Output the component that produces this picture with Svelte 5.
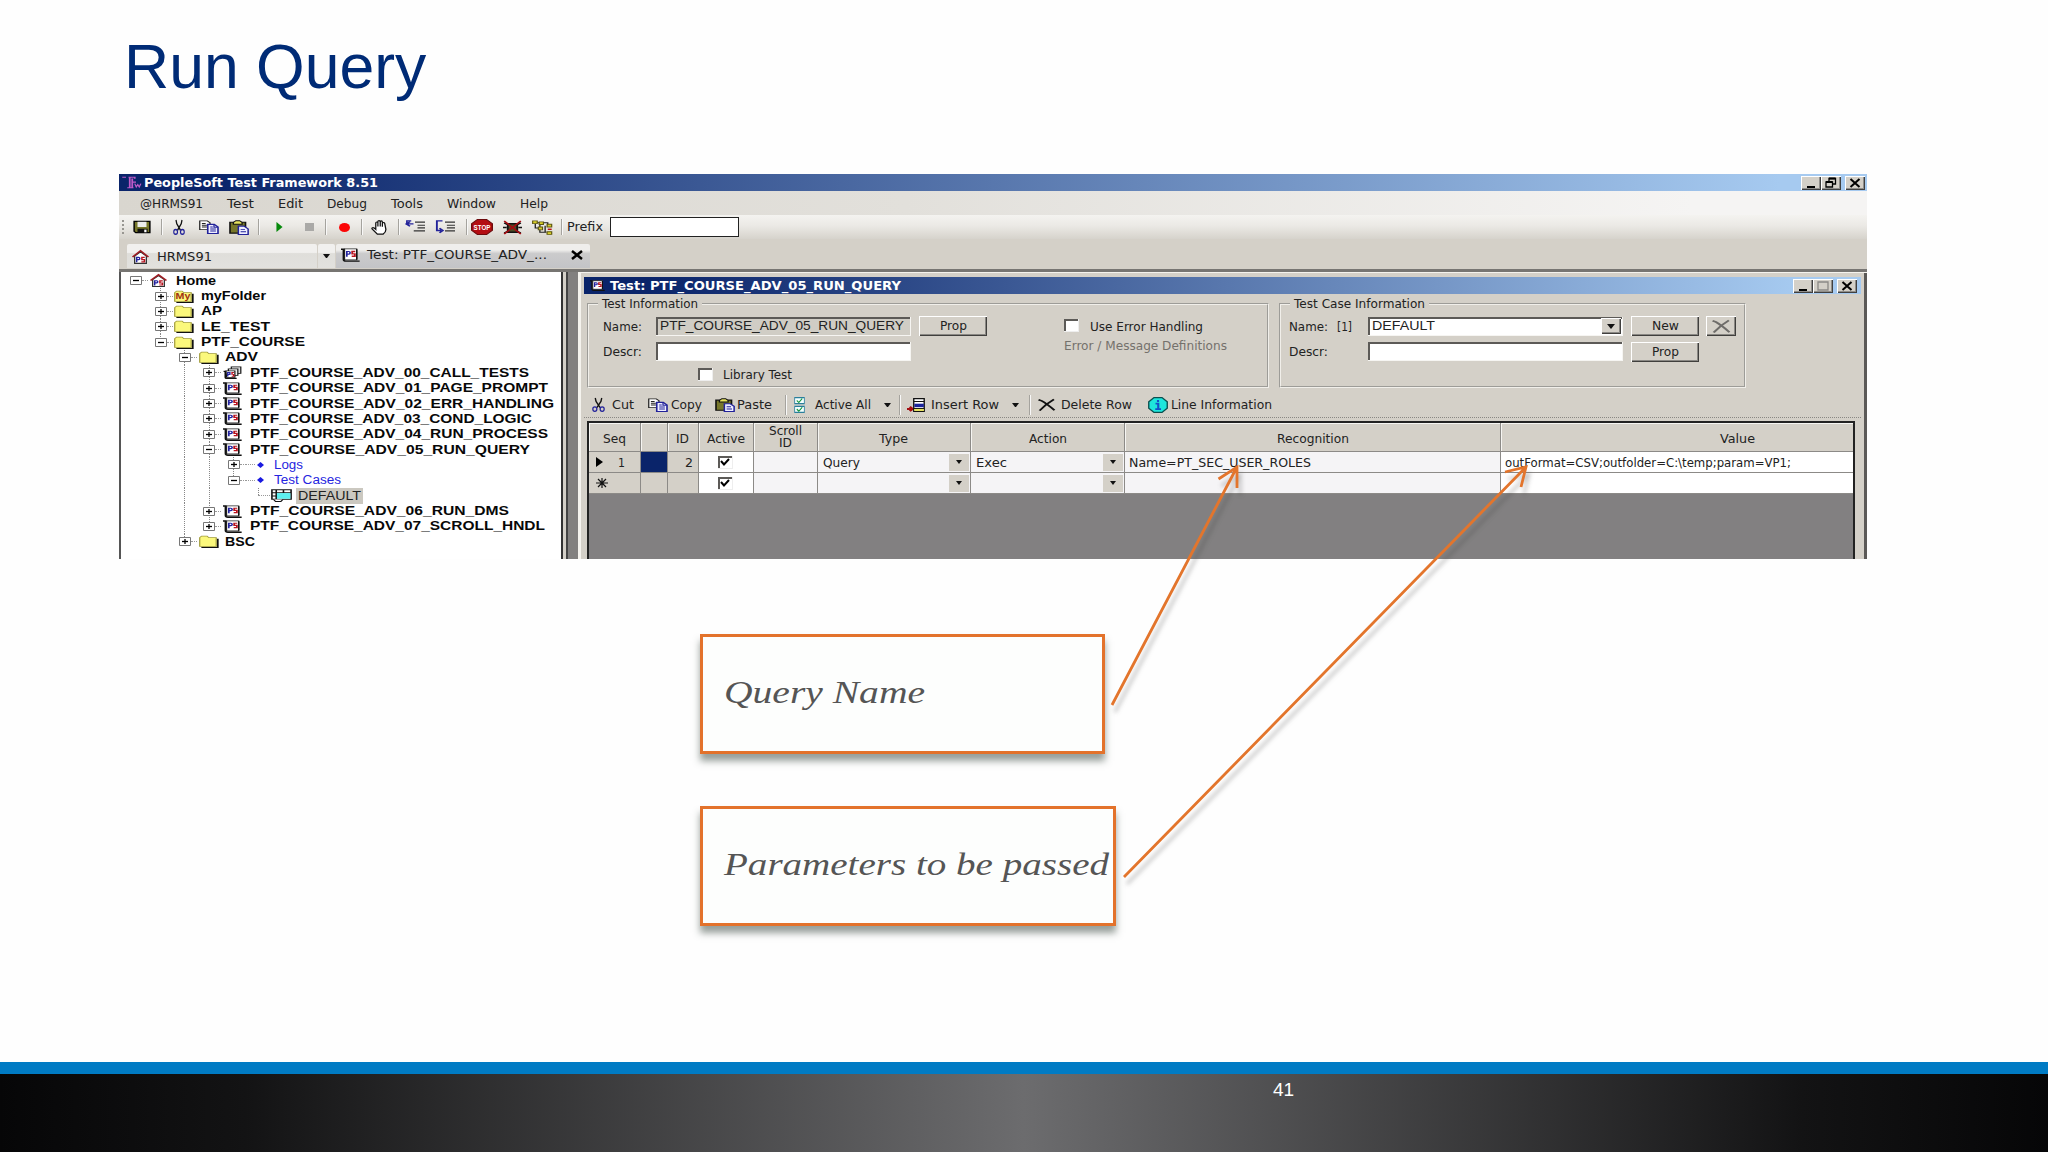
<script lang="ts">
  interface TreeNode {
    level: number;
    icon: string;
    label: string;
    width: number;
    box?: '+' | '-';
    rails?: number[];
    tail?: boolean;
  }

  const menu: [string, number][] = [
    ['@HRMS91', 63],
    ['Test', 27],
    ['Edit', 25],
    ['Debug', 40],
    ['Tools', 32],
    ['Window', 49],
    ['Help', 28],
  ];

  // `rails` lists the ancestor columns whose dotted line passes through the row.
  const tree: TreeNode[] = [
    { level: 0, icon: 'house', label: 'Home', width: 40, box: '-' },
    { level: 1, icon: 'my', label: 'myFolder', width: 65, box: '+' },
    { level: 1, icon: 'folder', label: 'AP', width: 21, box: '+' },
    { level: 1, icon: 'folder', label: 'LE_TEST', width: 69, box: '+' },
    { level: 1, icon: 'folder', label: 'PTF_COURSE', width: 104, box: '-', tail: true },
    { level: 2, icon: 'folder', label: 'ADV', width: 33, box: '-' },
    { level: 3, icon: 'calls', label: 'PTF_COURSE_ADV_00_CALL_TESTS', width: 279, box: '+', rails: [2] },
    { level: 3, icon: 'ps', label: 'PTF_COURSE_ADV_01_PAGE_PROMPT', width: 298, box: '+', rails: [2] },
    { level: 3, icon: 'ps', label: 'PTF_COURSE_ADV_02_ERR_HANDLING', width: 304, box: '+', rails: [2] },
    { level: 3, icon: 'ps', label: 'PTF_COURSE_ADV_03_COND_LOGIC', width: 282, box: '+', rails: [2] },
    { level: 3, icon: 'ps', label: 'PTF_COURSE_ADV_04_RUN_PROCESS', width: 298, box: '+', rails: [2] },
    { level: 3, icon: 'ps', label: 'PTF_COURSE_ADV_05_RUN_QUERY', width: 280, box: '-', rails: [2] },
    { level: 4, icon: 'dot', label: 'Logs', width: 29, box: '+', rails: [2, 3] },
    { level: 4, icon: 'dot', label: 'Test Cases', width: 67, box: '-', rails: [2, 3], tail: true },
    { level: 5, icon: 'case', label: 'DEFAULT', width: 63, rails: [2, 3] },
    { level: 3, icon: 'ps', label: 'PTF_COURSE_ADV_06_RUN_DMS', width: 259, box: '+', rails: [2] },
    { level: 3, icon: 'ps', label: 'PTF_COURSE_ADV_07_SCROLL_HNDL', width: 295, box: '+', rails: [2], tail: true },
    { level: 2, icon: 'folder', label: 'BSC', width: 30, box: '+', tail: true },
  ];
</script>

{#snippet fit(text: string, width: number, cls = '')}
  <svg class="fit {cls}" {width} height="16">
    <text x="0" y="12" textLength={width} lengthAdjust="spacingAndGlyphs">{text}</text>
  </svg>
{/snippet}

{#snippet icon(name: string, w = 19, h = 15)}
  <svg class="icon" width={w} height={h} viewBox="0 0 16 16" preserveAspectRatio="none" fill="none">
    {#if name === 'save'}
      <path d="M1 1.5h14v13H2.5L1 13z" fill="#77772a" stroke="#000" stroke-width="1.3" />
      <path d="M4 2h8v6H4z" fill="#ececec" />
      <path d="M4 10h9v4.5H4z" fill="#111" />
      <path d="M10 11h2v3h-2z" fill="#fff" />
    {:else if name === 'cut'}
      <path d="M4 0l1 4 5 7M12 0l-1 4-5 7" stroke="#111" stroke-width="1.7" />
      <circle cx="3.5" cy="12.7" r="2.5" stroke="#22229a" stroke-width="1.5" />
      <circle cx="12.5" cy="12.7" r="2.5" stroke="#22229a" stroke-width="1.5" />
    {:else if name === 'copy'}
      <path d="M.6 1h6l2.2 2.2V11H.6z" fill="#fff" stroke="#222" />
      <path d="M2.3 4h3M2.3 6h4M2.3 8h4" stroke="#222" />
      <path d="M7 5h5.2l3 3v7.4H7z" fill="#eef" stroke="#22229a" stroke-width="1.3" />
      <path d="M12 5v3.3h3M9 8h2M9 10.3h4.5M9 12.6h4.5" stroke="#22229a" />
    {:else if name === 'paste'}
      <path d="M.8 2.4h12.4V14H.8z" fill="#77772a" stroke="#111" stroke-width="1.3" />
      <path d="M3.5 4.5V2.7L5.5.8h3l2 1.9v1.8z" fill="#e6e25c" stroke="#111" />
      <path d="M7.5 6.5h4.5l3.3 3v6H7.5z" fill="#eef" stroke="#22229a" stroke-width="1.2" />
      <path d="M9.3 10h3.5M9.3 12.6h4.3" stroke="#22229a" />
    {:else if name === 'play'}
      <path d="M1 0l14 8L1 16z" fill="#078a0c" />
    {:else if name === 'square'}
      <path d="M0 0h16v16H0z" fill="#aaa9a7" />
    {:else if name === 'record'}
      <circle cx="8" cy="8" r="8" fill="#fb0505" />
    {:else if name === 'hand'}
      <path d="M4.5 10V3.3q0-1.2 1-1.2t1 1.2V7V1.8Q6.5.7 7.6.7t1.1 1.1V7V2q0-1.1 1-1.1t1 1.1v5.2V3.7q0-1 1-1t1.2 1L14 10q0 3-2.5 5H6L1 9.5q-.5-1 .6-1.3T4.500 10z" fill="#fff" stroke="#111" stroke-width="1.2" />
    {:else if name === 'into'}
      <path d="M.8 4.500h6M4 1.800L1 4.500l3 2.700" stroke="#22229a" stroke-width="1.500" />
      <path d="M1.500 4V1H5" stroke="#22229a" stroke-width="1.300" />
      <path d="M8 2.500h8M10 6h6M10 9h6M7 12.500h9" stroke="#333" stroke-width="1.400" />
    {:else if name === 'over'}
      <path d="M6 1H1.500v11H5M3.600 9.500L6.300 12l-2.700 2.500" stroke="#22229a" stroke-width="1.500" />
      <path d="M8 2.500h8M9.500 6h6.500M9.500 9h6.500M8 12.500h8" stroke="#333" stroke-width="1.400" />
    {:else if name === 'stop'}
      <path d="M4.700.5h6.600l4.200 4.200v6.600l-4.200 4.200H4.700L.5 11.300V4.700z" fill="#b40d13" stroke="#6d0a0c" />
      <text x="1.900" y="10.700" class="sign" textLength="12.200" lengthAdjust="spacingAndGlyphs">STOP</text>
    {:else if name === 'bug'}
      <path d="M1 3l3 2M15 3l-3 2M0 8h3M16 8h-3M1 14l3-2M15 14l-3-2M4 4h8v9H4z" fill="#4c4b25" stroke="#111" stroke-width="1.600" />
      <path d="M1 1l14 14M15 1L1 15" stroke="#a60b12" stroke-width="1.500" />
    {:else if name === 'map'}
      <path d="M2.500 4v4.500H6M6 4.500v8.500h5M4 3h8v4M10 6v7" stroke="#222" />
      <path d="M.5 1h3.500v2.800H.5zM5.500 2h3.200v2.800H5.500zM11.500 4.500H15v3h-3.500zM4.800 7.500H8v3H4.800zM11.500 12.500H15v2.900h-3.500z" fill="#d8cf27" stroke="#5e5710" stroke-width=".9" />
      <path d="M12 9.900h3" stroke="#b80f14" stroke-width="1.500" />
    {:else if name === 'house'}
      <path d="M2.500 7v8.300h11V7L8 2z" fill="#fff" stroke="#333" stroke-width="1.200" />
      <path d="M.5 8L8 .9 15.500 8" stroke="#a01c22" stroke-width="1.600" />
      <path d="M4.400 14V8.300h1.900q1 0 1 1.300t-1 1.300H4.400" stroke="#2424a0" stroke-width="1.400" />
      <path d="M12 8.500H9.300v2.600h2.400v2.400H8.800" stroke="#b81420" stroke-width="1.400" />
    {:else if name === 'folder' || name === 'my'}
      <path d="M2 15.300h13.800V4.500" stroke="#111" stroke-width="1.500" />
      <path d="M.6 14V3.200L2.200 1.300h4.600l1.500 2h6.200V14z" fill="#fbf87c" stroke="#a09a3a" />
      {#if name === 'my'}
        <text x="1.300" y="11.500" class="my" textLength="12.500" lengthAdjust="spacingAndGlyphs">My</text>
      {/if}
    {:else if name === 'ps'}
      <path d="M0 1.300h3M2.200 1.300v11.700q0 2 2 2h11.500" stroke="#111" stroke-width="1.700" />
      <path d="M3 1h10.200v12.500H3z" fill="#fff" stroke="#222" />
      <path d="M13.300 1.500v11.500" stroke="#111" stroke-width="1.200" />
      <path d="M4.900 10V4h1.700q1.100 0 1.100 1.500T6.600 7H4.900" stroke="#2424a0" stroke-width="1.400" />
      <path d="M12 4H9.400v2.700h2.300v2.700H9" stroke="#b81420" stroke-width="1.500" />
    {:else if name === 'calls'}
      <path d="M7 1h8v8H7z" fill="#ddd" stroke="#111" />
      <path d="M4.500 3.500h8v8h-8z" fill="#eee" stroke="#111" />
      <path d="M.5 6.500H2v7.500q0 1.200 1 1.200h8.500" stroke="#111" stroke-width="1.500" />
      <path d="M2.500 6H10v8H3z" fill="#fff" stroke="#111" />
      <path d="M4 13V8h1.800v2.500H4" stroke="#2424a0" stroke-width="1.200" />
      <path d="M9.200 8H7.600v2.300H9v2.200H7.300" stroke="#b81420" stroke-width="1.200" />
    {:else if name === 'case'}
      <path d="M.7 1h14.600v11.500H.7zM4 1v11.500M.7 4.500h14.600M.7 8.500H4M9.500 1v3" fill="#fff" stroke="#111" stroke-width="1.200" />
      <path d="M4.500 5h10.300v7H4.500z" fill="#5df0f0" />
      <path d="M2 13l1.500 2.400h4L9 13" fill="#fff" stroke="#111" />
    {:else if name === 'dot'}
      <path d="M8 0l8 8-8 8-8-8z" fill="#1a1ae0" />
    {:else if name === 'checks'}
      <path d="M1 .6h14v6H1zM1 9.300h14v6H1z" fill="#f5ffff" stroke="#2a7f9c" stroke-width="1.200" />
      <path d="M4 3.500l3 2 5-4M4 12.200l3 2 5-4" stroke="#13953c" stroke-width="1.400" />
    {:else if name === 'insert'}
      <path d="M0 12.500h5M2.500 10L5 12.500 2.500 15" stroke="#a50e12" stroke-width="2.200" />
      <path d="M6 .7h9.300v14.600H6z" fill="#fff" stroke="#111" stroke-width="1.200" />
      <path d="M6 4h9.300M6 12h9.300" stroke="#111" />
      <path d="M6.500 6.500h8.500v4H6.500z" fill="#1a239a" />
      <path d="M6.500 12.500h8.500v2.300H6.500z" fill="#e6e25c" />
    {:else if name === 'delete' || name === 'disabled'}
      <path d="M.5 1l3 1.500Q8 6 15.500 15M15 .5Q8 6 1.500 15.500" stroke={name === 'delete' ? '#111' : '#6e6c69'} stroke-width="2.100" />
    {:else if name === 'info'}
      <path d="M4.800.6h6.400l4.200 4.200v6.400l-4.200 4.200H4.800L.6 11.200V4.800z" fill="#1ee6dc" stroke="#0c4f4f" stroke-width="1.100" />
      <path d="M8 3v2M6 6.700h2.200V12M5.800 12.200h4.600" stroke="#1450c8" stroke-width="1.700" />
    {:else if name === 'logo'}
      <path d="M1 1.500h3M6 1.500h5v2M7 2v12M9 3v11M5 14.500h5M9 7.500h3" stroke="#c05ac8" stroke-width="1.400" />
      <path d="M11 9.500l1.200 4 1.200-3 1.200 3 1.300-4" stroke="#c05ac8" />
    {/if}
  </svg>
{/snippet}

{#snippet controls(middle: string)}
  <div class="controls">
    <span class="control"><svg width="20" height="14"><path d="M6 11h8" stroke="#000" stroke-width="2" /></svg></span>
    <span class="control">
      <svg width="20" height="14" fill="none">
        {#if middle === 'restore'}
          <path d="M8 5V2.500h6.500V8H12M5 6h6.500v5H5z" stroke="#000" stroke-width="1.300" />
          <path d="M8 2.500h6.500M5 6h6.500" stroke="#000" stroke-width="2" />
        {:else}
          <path d="M5 3h10v8H5z" stroke="#8b8986" stroke-width="1.300" />
        {/if}
      </svg>
    </span>
    <span class="control close"><svg width="20" height="14"><path d="M5.500 3l9 8M14.500 3l-9 8" stroke="#000" stroke-width="2" /></svg></span>
  </div>
{/snippet}

{#snippet check(checked: boolean)}
  <span class="check">
    {#if checked}<svg width="12" height="10" fill="none"><path d="M2 4l3 3.500L10 2" stroke="#000" stroke-width="2" /></svg>{/if}
  </span>
{/snippet}

{#snippet line(row: number, seq: string, id: string, type: string, typeWidth: number, action: string, actionWidth: number)}
  <div class="cell seq">
    {#if row === 1}
      <svg width="7" height="10"><path d="M0 0l7 5-7 5z" /></svg>
    {:else}
      <svg width="12" height="10"><path d="M6 0v10M0 5h12M2 1l8 8M10 1L2 9" stroke="#111" stroke-width="1.200" /></svg>
    {/if}
    {#if seq}{@render fit(seq, 7)}{/if}
  </div>
  <div class="cell" class:marked={row === 1}></div>
  <div class="cell id">{#if id}{@render fit(id, 8)}{/if}</div>
  <div class="cell white center">{@render check(true)}</div>
  <div class="cell pale"></div>
  <div class="cell pale combo">{#if type}{@render fit(type, typeWidth)}{/if}<i class="drop"></i></div>
  <div class="cell pale combo">{#if action}{@render fit(action, actionWidth)}{/if}<i class="drop"></i></div>
{/snippet}

<main class="slide">
  <header class="heading"><h1>Run Query</h1></header>

  <section class="app">
    <div class="titlebar">
      {@render icon('logo', 20, 13)}
      {@render fit('PeopleSoft Test Framework 8.51', 234, 'strong')}
      {@render controls('restore')}
    </div>

    <nav class="menu">
      {#each menu as [label, width]}{@render fit(label, width)}{/each}
    </nav>

    <div class="toolbar main-tools">
      <i class="grip"></i>
      {@render icon('save', 18, 14)}
      <i class="sep"></i>
      {@render icon('cut', 12, 15)}
      {@render icon('copy', 20, 14)}
      {@render icon('paste', 20, 15)}
      <i class="sep"></i>
      {@render icon('play', 7, 10)}
      {@render icon('square', 9, 8)}
      <i class="sep"></i>
      {@render icon('record', 11, 9)}
      <i class="sep"></i>
      {@render icon('hand', 17, 15)}
      <i class="sep"></i>
      {@render icon('into', 20, 14)}
      {@render icon('over', 20, 14)}
      <i class="sep"></i>
      {@render icon('stop', 22, 16)}
      {@render icon('bug', 19, 15)}
      {@render icon('map', 21, 15)}
      <i class="sep"></i>
      {@render fit('Prefix', 36)}
      <span class="prefix"></span>
    </div>

    <div class="tabs">
      <div class="tab home">{@render icon('house', 17, 14)}{@render fit('HRMS91', 55, 'tall')}</div>
      <div class="tab picker"><i class="arrow"></i></div>
      <div class="tab test">
        {@render icon('ps', 19, 14)}
        {@render fit('Test: PTF_COURSE_ADV_...', 180)}
        <svg class="shut" width="12" height="10"><path d="M1 1l10 8M11 1L1 9" stroke="#000" stroke-width="2.500" /></svg>
      </div>
    </div>

    <div class="workspace">
      <aside class="tree">
        {#each tree as node}
          <div class="node">
            {#each Array(node.level) as _, k}
              <span class="rail" class:line={node.rails?.includes(k)}></span>
            {/each}
            {#if node.box}
              <span class="rail own" class:line={node.level > 0} class:tail={node.tail}>
                <svg class="box" width="12" height="9">
                  <path d="M.5.5h11v8H.5z" fill="#fff" stroke="#777" />
                  <path d="M3 4.500h6" stroke="#000" stroke-width="1.300" />
                  {#if node.box === '+'}<path d="M6 2v5" stroke="#000" stroke-width="1.300" />{/if}
                </svg>
              </span>
            {:else}
              <span class="rail line tail elbow"></span>
            {/if}
            <span class="glyph" class:leaf={node.icon === 'dot'} class:case={node.icon === 'case'}>
              {#if node.icon === 'dot'}
                {@render icon('dot', 7, 6)}
              {:else}
                {@render icon(node.icon, node.icon === 'house' ? 17 : node.icon === 'case' ? 21 : 19, 13)}
              {/if}
            </span>
            <span class="name" class:selected={node.icon === 'case'}>
              {@render fit(node.label, node.width, node.icon === 'dot' ? 'link' : node.icon === 'case' ? 'plain' : 'bold')}
            </span>
          </div>
        {/each}
      </aside>

      <div class="gutter"></div>

      <section class="child">
        <div class="titlebar inner">
          {@render icon('ps', 15, 11)}
          {@render fit('Test: PTF_COURSE_ADV_05_RUN_QUERY', 291, 'strong')}
          {@render controls('maximize')}
        </div>

        <div class="groups">
          <fieldset class="info">
            <legend>{@render fit('Test Information', 96)}</legend>
            <div class="fields">
              <div class="field">
                <span class="label">{@render fit('Name:', 39)}</span>
                <span class="input readonly">{@render fit('PTF_COURSE_ADV_05_RUN_QUERY', 244, 'value')}</span>
                <span class="button">{@render fit('Prop', 27)}</span>
              </div>
              <div class="field second">
                <span class="label">{@render fit('Descr:', 39)}</span>
                <span class="input"></span>
              </div>
              <div class="field library">{@render check(false)}{@render fit('Library Test', 69)}</div>
            </div>
            <div class="errors">
              <div class="option">{@render check(false)}{@render fit('Use Error Handling', 113)}</div>
              {@render fit('Error / Message Definitions', 163, 'muted')}
            </div>
          </fieldset>

          <fieldset class="cases">
            <legend>{@render fit('Test Case Information', 131)}</legend>
            <div class="fields">
              <div class="field">
                <span class="label">{@render fit('Name:', 39)}{@render fit('[1]', 15)}</span>
                <span class="input">{@render fit('DEFAULT', 63, 'value')}<i class="drop raised"></i></span>
                <span class="button">{@render fit('New', 27)}</span>
                <span class="button small">{@render icon('disabled', 18, 13)}</span>
              </div>
              <div class="field second">
                <span class="label">{@render fit('Descr:', 39)}</span>
                <span class="input"></span>
                <span class="button">{@render fit('Prop', 27)}</span>
              </div>
            </div>
          </fieldset>
        </div>

        <div class="toolbar row-tools">
          {@render icon('cut', 13, 14)}
          {@render fit('Cut', 22)}
          {@render icon('copy', 20, 14)}
          {@render fit('Copy', 31)}
          {@render icon('paste', 20, 14)}
          {@render fit('Paste', 35)}
          <i class="sep"></i>
          {@render icon('checks', 11, 16)}
          {@render fit('Active All', 56)}
          <i class="arrow"></i>
          <i class="sep"></i>
          {@render icon('insert', 18, 14)}
          {@render fit('Insert Row', 68)}
          <i class="arrow"></i>
          <i class="sep"></i>
          {@render icon('delete', 17, 12)}
          {@render fit('Delete Row', 71)}
          {@render icon('info', 20, 16)}
          {@render fit('Line Information', 101)}
        </div>

        <div class="sheet">
          <div class="grid">
            <div class="cell head">{@render fit('Seq', 23)}</div>
            <div class="cell head"></div>
            <div class="cell head">{@render fit('ID', 13)}</div>
            <div class="cell head">{@render fit('Active', 38)}</div>
            <div class="cell head stacked">{@render fit('Scroll', 33)}{@render fit('ID', 13)}</div>
            <div class="cell head">{@render fit('Type', 29)}</div>
            <div class="cell head">{@render fit('Action', 38)}</div>
            <div class="cell head">{@render fit('Recognition', 72)}</div>
            <div class="cell head">{@render fit('Value', 35)}</div>

            {@render line(1, '1', '2', 'Query', 37, 'Exec', 31)}
            <div class="cell pale text">{@render fit('Name=PT_SEC_USER_ROLES', 182)}</div>
            <div class="cell white text">{@render fit('outFormat=CSV;outfolder=C:\\temp;param=VP1;', 286)}</div>

            {@render line(2, '', '', '', 0, '', 0)}
            <div class="cell pale"></div>
            <div class="cell white"></div>
          </div>
        </div>
      </section>
    </div>
  </section>

  <section class="notes">
    <div class="note">{@render fit('Query Name', 201, 'script')}</div>
    <div class="note wide">{@render fit('Parameters to be passed', 385, 'script')}</div>
  </section>

  <svg class="pointers" width="2048" height="1152" fill="none">
    <path d="M1112 705L1237 467M1218.500 479L1237 467V488" />
    <path d="M1124 877L1526 467M1505 472L1526 467L1521 487" />
  </svg>

  <footer><span>41</span></footer>
</main>

<style>
  :global(body) {
    background: #fff;
  }
  .slide {
    position: relative;
    display: flex;
    flex-direction: column;
    width: 2048px;
    height: 1152px;
    overflow: hidden;
    background: #fefefe;
    font-family: 'DejaVu Sans', Verdana, sans-serif;
    font-size: 12px;
    color: #222;
  }
  .slide * {
    box-sizing: border-box;
  }
  svg {
    display: block;
    flex: none;
  }
  i {
    display: block;
    flex: none;
  }
  .icon {
    overflow: visible;
  }
  .heading {
    height: 174px;
    padding: 31px 0 0 124px;
  }
  h1 {
    margin: 0;
    font: 400 62.5px/70px 'Liberation Sans', Arial, sans-serif;
    color: #002b76;
  }

  /* stretched labels */
  .fit {
    overflow: visible;
    fill: #222;
  }
  .strong {
    fill: #fff;
    font-weight: 700;
  }
  .bold,
  .link,
  .plain,
  .value {
    font-family: 'Liberation Sans', Arial, sans-serif;
    font-size: 12.5px;
  }
  .bold {
    fill: #080808;
    font-weight: 700;
  }
  .link {
    fill: #2525e0;
  }
  .value {
    font-size: 13.5px;
  }
  .tall {
    font-size: 12.8px;
  }
  .muted {
    fill: #74716c;
  }
  .script {
    fill: #555;
    font-family: 'Lucida Handwriting', 'Liberation Serif', serif;
    font-size: 32px;
    font-style: italic;
  }
  .sign {
    fill: #fff;
    font: 700 7px 'Liberation Sans', sans-serif;
  }
  .my {
    fill: #a03010;
    font: 700 11px 'Liberation Sans', sans-serif;
  }

  .app {
    display: flex;
    flex-direction: column;
    width: 1748px;
    height: 385px;
    margin-left: 119px;
    overflow: hidden;
    background: #d4d0c8;
  }
  .titlebar {
    display: flex;
    align-items: center;
    gap: 3px;
    height: 17px;
    flex: none;
    padding: 0 2px;
    background: linear-gradient(90deg, #0a246a 5%, #a6caf0 95%);
  }
  .controls {
    display: flex;
    margin-left: auto;
  }
  .control {
    width: 20px;
    height: 14px;
    overflow: hidden;
    background: #d4d0c8;
    box-shadow: inset 1px 1px #fff, inset -1px -1px #404040, inset -2px -2px #908e8a;
  }
  .close {
    margin-left: 4px;
  }
  .menu {
    display: flex;
    align-items: center;
    gap: 24px;
    height: 24px;
    flex: none;
    padding: 2px 0 0 21px;
    background: linear-gradient(90deg, #d9d6cf, #e2e0db 45%, #f5f4f3 90%);
  }
  .toolbar {
    display: grid;
    align-items: center;
    flex: none;
  }
  .main-tools {
    grid-template-columns:
      14px 28px 12px 26px 30px 29px 18px 28.5px 20px 14px 22.5px 9.5px 27.5px 6.5px 30px 31px 5px
      32px 29px 29.5px 6px 43px 129px;
    height: 24px;
    background: linear-gradient(#f4f3f0, #ebe9e5 45%, #d6d3cc);
  }
  .sep {
    width: 2px;
    height: 16px;
    border-left: 1px solid #a5a39e;
    border-right: 1px solid #f8f8f8;
  }
  .grip {
    width: 2px;
    height: 15px;
    margin-left: 3px;
    background: repeating-linear-gradient(#989691 0 2px, transparent 2px 4px);
  }
  .prefix {
    height: 20px;
    border: 1px solid #222;
    background: #fff;
  }
  .tabs {
    display: flex;
    align-items: flex-end;
    height: 30px;
    flex: none;
    padding: 0 0 1px 8px;
  }
  .tab {
    display: flex;
    align-items: center;
    height: 24px;
    background: linear-gradient(#f1f0ee 35%, #dfdeda 40%, #e2e1de);
    border-radius: 2px 2px 0 0;
  }
  .home {
    width: 190px;
    gap: 8px;
    padding: 2px 0 0 5px;
  }
  .picker {
    justify-content: center;
    width: 17px;
    margin: 0 1px;
  }
  .test {
    width: 254px;
    gap: 7px;
    padding: 0 7px 2px 5px;
    background: linear-gradient(#efeeec 25%, #cbcbcc 40%, #c3c4c7);
  }
  .shut {
    margin-left: auto;
  }
  .arrow {
    width: 7px;
    border: solid transparent;
    border-width: 4px 3.5px 0;
    border-top-color: #111;
  }
  .workspace {
    display: flex;
    flex: 1;
    min-height: 0;
    border-top: 3px solid #777572;
  }

  /* test tree */
  .tree {
    width: 444px;
    padding: 1px 0 0 3px;
    border-left: 2px solid #555;
    border-right: 2px solid #333;
    background: #fff;
  }
  .node {
    display: flex;
    align-items: center;
    height: 15.37px;
  }
  .rail {
    display: flex;
    align-items: center;
    justify-content: center;
    width: 24.4px;
    height: 100%;
    flex: none;
  }
  .line {
    background: repeating-linear-gradient(#888 0 1px, transparent 1px 2px) 50% 0 / 1px 100% no-repeat;
  }
  .tail {
    background-size: 1px 50%;
  }
  .own::after {
    content: '';
    width: 6px;
    margin-right: -6px;
    border-top: 1px dotted #999;
  }
  .elbow {
    justify-content: flex-end;
  }
  .elbow::after {
    content: '';
    width: 12px;
    border-top: 1px dotted #999;
  }
  .glyph {
    width: 28px;
    flex: none;
    padding-left: 1.5px;
  }
  .leaf {
    display: flex;
    align-items: center;
    gap: 2px;
    padding-left: 0;
  }
  .leaf::before {
    content: '';
    width: 9px;
    border-top: 1px dotted #999;
  }
  .case {
    width: 26px;
    padding-left: 1px;
  }
  .name {
    display: flex;
  }
  .selected {
    padding: 0 2px;
    background: #cbc8c0;
  }

  .gutter {
    width: 15px;
    flex: none;
    border-left: 3px solid #d4d0c8;
    background: #82807f;
    box-shadow: inset 2px 0 #444;
  }
  .child {
    display: flex;
    flex-direction: column;
    flex: 1;
    min-width: 0;
    padding: 4px 6px 0 3px;
    border: solid #f5f3ee;
    border-width: 1px 0 0 3px;
    box-shadow: inset -3px 0 #5b5957;
    background: #d4d0c8;
  }
  .inner {
    gap: 5px;
    padding: 0 4px 0 6px;
  }
  .groups {
    display: flex;
    gap: 10px;
    height: 99px;
    flex: none;
    padding: 1px 0 0 3px;
  }
  fieldset {
    display: flex;
    height: 93px;
    min-width: 0;
    margin: 0;
    padding: 0;
    border: 2px groove #f1efea;
  }
  legend {
    height: 17px;
    margin-left: 9px;
    padding: 1px 4px 0;
  }
  .info {
    width: 682px;
  }
  .info .fields {
    width: 461px;
    padding-left: 14px;
  }
  .cases {
    width: 467px;
  }
  .cases .fields {
    padding-left: 8px;
  }
  .field {
    display: flex;
    align-items: center;
    height: 28px;
  }
  .field > .label {
    padding-top: 1px;
  }
  .second {
    height: 23px;
  }
  .label {
    display: flex;
    gap: 9px;
    width: 53px;
  }
  .cases .label {
    width: 79px;
  }
  .input {
    display: flex;
    align-items: center;
    justify-content: space-between;
    width: 255px;
    height: 19px;
    padding-left: 4px;
    border: solid #f6f5f2;
    border-width: 0 1px 1px 0;
    box-shadow: inset 2px 2px #5c5a57;
    background: #fff;
  }
  .readonly {
    background: #d0cdc5;
  }
  .button {
    display: flex;
    align-items: center;
    justify-content: center;
    width: 68px;
    height: 20px;
    margin-left: 8px;
    box-shadow: inset 1px 1px #fff, inset -1px -1px #403f3d, inset -2px -2px #8a8884;
  }
  .small {
    width: 30px;
    margin-left: 7px;
  }
  .drop {
    display: flex;
    align-items: center;
    justify-content: center;
    width: 20px;
    height: 17px;
    margin-left: auto;
    background: #d4d0c8;
  }
  .drop::after {
    content: '';
    border: solid transparent;
    border-width: 4px 3px 0;
    border-top-color: #111;
  }
  .raised {
    height: 16px;
    margin-top: 1px;
    margin-right: 1px;
    box-shadow: inset 1px 1px #fff, inset -1px -1px #403f3d, inset -2px -2px #8a8884;
  }
  .raised::after {
    border-width: 5px 4.5px 0;
  }
  .library {
    gap: 10px;
    height: 22px;
    padding-left: 95px;
  }
  .library .fit {
    margin-top: 2px;
  }
  .check {
    display: flex;
    align-items: center;
    justify-content: center;
    width: 15px;
    height: 13px;
    border: solid #eee;
    border-width: 0 1px 1px 0;
    box-shadow: inset 2px 2px #5c5a57;
    background: #fff;
  }
  .errors {
    display: flex;
    flex-direction: column;
    gap: 3px;
    padding: 7px 0 0 14px;
  }
  .option {
    display: flex;
    gap: 11px;
  }
  .row-tools {
    grid-template-columns:
      20px 36px 23px 44px 22px 48px 9px 21px 69px 15px 8px 24px 81px 17px 9px 23px 87px 23px 101px;
    height: 25px;
    padding: 0 0 1px 8px;
    border-bottom: 1px dotted #8a8884;
  }
  .row-tools .sep {
    height: 20px;
  }

  /* steps grid */
  .sheet {
    flex: 1;
    min-height: 0;
    width: 1268px;
    margin: 3px 0 0 3px;
    overflow: hidden;
    border: solid #222;
    border-width: 2px 2px 0;
    background: #828081;
  }
  .grid {
    display: grid;
    grid-template-columns: 51.5px 27px 31.5px 54.5px 64px 153.5px 154px 376px 474px;
    grid-template-rows: 29px 21px 21px;
  }
  .cell {
    display: flex;
    align-items: center;
    min-width: 0;
    border: solid #8c8a87;
    border-width: 0 1px 1px 0;
    background: #d4d0c8;
  }
  .head {
    justify-content: center;
    padding-top: 3px;
    box-shadow: inset 1px 1px #f6f5f2;
  }
  .stacked {
    flex-direction: column;
    justify-content: flex-start;
    padding: 0;
  }
  .stacked .fit {
    height: 12px;
  }
  .seq {
    gap: 15px;
    padding-left: 7px;
  }
  .id {
    justify-content: flex-end;
    padding-right: 5px;
  }
  .white {
    background: #fff;
  }
  .center {
    justify-content: center;
  }
  .pale {
    background: #f5f4f6;
  }
  .marked {
    background: #0a246a;
  }
  .cell:not(.head) > .fit {
    margin-top: 1px;
  }
  .combo {
    padding: 0 1px 0 5px;
  }
  .text {
    padding-left: 4px;
  }

  .notes {
    display: flex;
    flex-direction: column;
    gap: 52px;
    margin: 75px 0 0 700px;
  }
  .note {
    display: flex;
    align-items: center;
    width: 405px;
    height: 120px;
    padding: 10px 0 0 21px;
    border: 3px solid #e3722b;
    background: #fdfefd;
    box-shadow: 0 7px 7px rgba(50, 65, 55, 0.5);
  }
  .wide {
    width: 416px;
  }
  .pointers {
    position: absolute;
    inset: 0;
    stroke: #e3752c;
    stroke-width: 2.8;
    filter: drop-shadow(3px 7px 2px rgba(60, 60, 60, 0.3));
  }
  footer {
    height: 90px;
    margin-top: auto;
    padding: 5px 0 0 1273px;
    border-top: 12px solid #007bc4;
    background: linear-gradient(90deg, #060607, #131314 12%, #6c6c6e 50%, #131314 88%, #060607);
    color: #fff;
    font: 19px/22px 'Liberation Sans', Arial, sans-serif;
  }
</style>
